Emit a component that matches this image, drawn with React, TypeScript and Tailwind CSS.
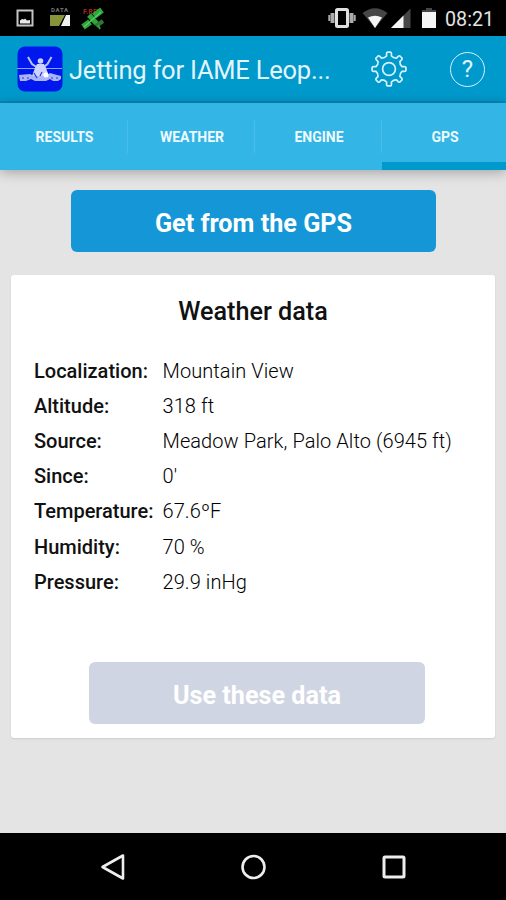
import type { ReactNode } from "react";

const weather = [
  { label: "Localization:", value: "Mountain View" },
  { label: "Altitude:", value: "318 ft" },
  { label: "Source:", value: "Meadow Park, Palo Alto (6945 ft)" },
  { label: "Since:", value: "0'" },
  { label: "Temperature:", value: "67.6ºF" },
  { label: "Humidity:", value: "70 %" },
  { label: "Pressure:", value: "29.9 inHg" },
];

const tabs = ["RESULTS", "WEATHER", "ENGINE", "GPS"];

// outline of the settings gear: eight teeth around the centre
const polar = (r: number, deg: number) => {
  const a = (deg * Math.PI) / 180;
  return `${(r * Math.sin(a)).toFixed(2)} ${(-r * Math.cos(a)).toFixed(2)}`;
};
const gearPath =
  [0, 45, 90, 135, 180, 225, 270, 315]
    .map(
      (t, i) =>
        `${i === 0 ? "M" : "L"}${polar(13.2, t - 10.5)} L${polar(15.6, t - 9)} Q${polar(17, t - 8)} ${polar(17, t - 5)} L${polar(17, t + 5)} Q${polar(17, t + 8)} ${polar(15.6, t + 9)} L${polar(13.2, t + 10.5)} Q${polar(11.6, t + 22.5)} ${polar(13.2, t + 34.5)}`
    )
    .join(" ") + "Z";

const StatusBar = () => {
  return (
    <div className="flex h-9 shrink-0 items-center justify-between bg-black">
      <svg width="130" height="36" className="shrink-0">
        <rect x="17.5" y="10.5" width="15" height="15" fill="none" stroke="#c4c4c4" strokeWidth="2" />
        <path d="M20 23.5v-3l2-1.500 2 .5 1-1 2 2 3-.5v3.500z" fill="#e8e8e8" />
        <text x="51" y="12" fontSize="6" fontWeight="700" textLength="17" fill="#777" className="font-['Roboto',sans-serif]">
          DATA
        </text>
        <path d="M50 15h15l-6 11h-9z" fill="#87943a" />
        <path d="M66 15h4v11h-9z" fill="#f0f0f0" />
        <text x="83" y="14" fontSize="7" fontWeight="700" textLength="18" fill="#a3291c" className="font-['Roboto',sans-serif]">
          F.REE
        </text>
        <g stroke="#2fa53c" fill="none">
          <path d="M83 27l7-5" strokeWidth="6" />
          <path d="M94 16l8-6" strokeWidth="6" />
          <path d="M89 15l8 9" strokeWidth="5" />
          <path d="M96 26l7-5" strokeWidth="4" stroke="#287a36" />
          <path d="M98 25l2 4" strokeWidth="2" />
        </g>
        <path d="M84 27l17-15" stroke="#4fd05b" strokeWidth="1.500" />
      </svg>
      <div className="flex items-center">
        <svg width="120" height="36" viewBox="-7 0 120 36" className="shrink-0">
          <rect x="9.500" y="9.500" width="11" height="17" rx="1" fill="none" stroke="#e0e0e0" strokeWidth="3" />
          <path d="M5.500 13v10M24.500 13v10" stroke="#aaa" strokeWidth="4" />
          <path d="M2.300 15v6M27.700 15v6" stroke="#aaa" strokeWidth="2" />
          <path d="M35.500 13Q48 3.500 60.500 13L48 28z" fill="#464646" />
          <path d="M41 17.500Q48 14 55 17.500L48 28z" fill="#f5f5f5" />
          <path d="M83.500 8.500V28H64z" fill="#464646" />
          <path d="M76.500 15.500V28H64z" fill="#f5f5f5" />
          <path d="M99 8h6v2h4v3H95v-3h4z" fill="#464646" />
          <rect x="95" y="12" width="14" height="16" fill="#f5f5f5" />
        </svg>
        <span className="w-[66px] whitespace-nowrap pl-[5px] pt-[3px] text-[19.700px] text-[#e4e4e4]">
          08:21
        </span>
      </div>
    </div>
  );
};

const AppIcon = () => {
  return (
    <svg width="46" height="46" viewBox="0 0 46 46" className="shrink-0">
      <rect x="0.500" y="0.500" width="45" height="45" rx="7.500" fill="#0018ee" />
      <path d="M0 22.500h45" stroke="#8ea0ff" strokeWidth="1.200" />
      <path d="M11 11l4 7 6 4M34.500 11l-4 7-5 4" fill="none" stroke="#b9c3ff" strokeWidth="2" />
      <circle cx="23.500" cy="15" r="2.800" fill="#c9d0ff" />
      <path d="M20 18h7l2 4 3 8H15l3-8z" fill="#cdd4ff" />
      <path d="M2 29l11-1 4 2h12l4-3 7 2 4 1v3l-3 2h-5l-3-2-4 2H18l-4-2-5 2H3z" fill="#aab5f8" />
      <path d="M5 32h2M10 32h2M17 27l3 5M23 30l2-4M34 32h2M39 32h2" stroke="#2336e8" strokeWidth="1.200" />
      <circle cx="29" cy="29" r="2.500" fill="#fff" />
    </svg>
  );
};

const Header = () => {
  return (
    <div className="flex h-[67px] shrink-0 items-center border-b-2 border-[#0789b9] bg-[#0099cc] pl-[17px]">
      <AppIcon />
      <h1 className="w-[307px] whitespace-nowrap pl-[6px] pt-[4px] text-[25.500px] tracking-[-0.22px] text-[#e3f4fa]">
        Jetting for IAME Leop...
      </h1>
      <button className="w-[38px] pt-px">
        <svg width="38" height="38" viewBox="-19 -19 38 38" fill="none" stroke="#d5f2fc" strokeWidth="1.700" strokeLinejoin="round">
          <path d={gearPath} />
          <circle r="6.400" />
        </svg>
      </button>
      <button className="mt-px ml-[42px] flex size-[35px] items-center justify-center rounded-full border-[1.500px] border-[#d5f2fc] text-[24px] leading-none text-[#e3f4fa]">
        ?
      </button>
    </div>
  );
};

const Tabs = () => {
  return (
    <div className="z-10 flex h-[67px] shrink-0 bg-[#33b5e5] shadow-[0_2px_12px_rgba(0,0,0,0.3)]">
      {tabs.map((tab) => {
        return (
          <div
            key={tab}
            className={`flex items-center border-b-[8px] ${
              tab === "GPS"
                ? "flex-1 border-[#0099cc]"
                : "w-[127px] border-transparent first:w-[128px]"
            }`}
          >
            <span className="flex-1 pt-[9px] pl-[2px] text-center text-[14px] font-bold text-[#eefaff]">
              {tab}
            </span>
            {tab !== "GPS" && <span className="mt-[7px] h-[33px] w-px bg-[#4bbde9]"></span>}
          </div>
        );
      })}
    </div>
  );
};

const BigButton = ({ className, children }: { className: string; children: ReactNode }) => {
  return (
    <button
      className={`flex h-[62px] shrink-0 items-center justify-center rounded-md pt-[6px] text-[25.200px] font-bold text-white ${className}`}
    >
      {children}
    </button>
  );
};

const NavBar = () => {
  return (
    <div className="flex h-[67px] shrink-0 items-center justify-between bg-black px-[98px]">
      <svg width="30" height="30" fill="none" stroke="#eee" strokeWidth="2.600" strokeLinejoin="round">
        <path d="M4.500 15L25 3.500v23z" />
      </svg>
      <svg width="30" height="30" fill="none" stroke="#eee" strokeWidth="2.600">
        <circle cx="15.500" cy="15" r="11" />
      </svg>
      <svg width="30" height="30" fill="none" stroke="#eee" strokeWidth="3">
        <rect x="6" y="5" width="20" height="20" rx="1" />
      </svg>
    </div>
  );
};

const App = () => {
  return (
    <div className="flex h-[900px] w-[506px] flex-col overflow-hidden bg-[#e4e4e4] font-['Roboto',sans-serif]">
      <StatusBar />
      <Header />
      <Tabs />
      <main className="flex flex-1 flex-col px-[11px] pt-5">
        <BigButton className="ml-[60px] w-[365px] bg-[#1597d7]">Get from the GPS</BigButton>
        <section className="mt-[23px] flex h-[463px] flex-col rounded-[3px] bg-white px-[23px] shadow-[0_1px_2px_rgba(0,0,0,0.1)]">
          <h2 className="mt-[18px] text-center text-[25.200px] leading-[38px] font-medium text-[#111]">
            Weather data
          </h2>
          <dl className="mt-[22px]">
            {weather.map(({ label, value }) => {
              return (
                <div key={label} className="flex h-[35.200px] items-center whitespace-nowrap text-[20px] text-black">
                  <dt className="w-[128.500px] font-medium text-[#111]">{label}</dt>
                  <dd className="font-light tracking-[0.080px]">{value}</dd>
                </div>
              );
            })}
          </dl>
          <BigButton className="mt-[63px] ml-[55px] w-[336px] bg-[#cfd5e2]">Use these data</BigButton>
        </section>
      </main>
      <NavBar />
    </div>
  );
};

export default App;
